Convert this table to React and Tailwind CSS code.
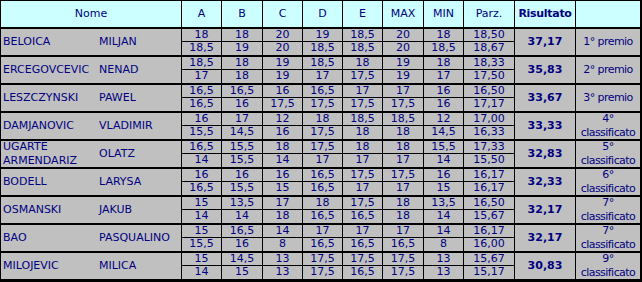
const rows = [
  ["BELOICA", "MILJAN", ["18", "18", "20", "19", "18,5", "20", "18", "18,50"], ["18,5", "19", "20", "18,5", "18,5", "20", "18,5", "18,67"], "37,17", ["1° premio"]],
  ["ERCEGOVCEVIC", "NENAD", ["18,5", "18", "19", "18,5", "18", "19", "18", "18,33"], ["17", "18", "19", "17", "17,5", "19", "17", "17,50"], "35,83", ["2° premio"]],
  ["LESZCZYNSKI", "PAWEL", ["16,5", "16,5", "16", "16,5", "17", "17", "16", "16,50"], ["16,5", "16", "17,5", "17,5", "17,5", "17,5", "16", "17,17"], "33,67", ["3° premio"]],
  ["DAMJANOVIC", "VLADIMIR", ["16", "17", "12", "18", "18,5", "18,5", "12", "17,00"], ["15,5", "14,5", "16", "17,5", "18", "18", "14,5", "16,33"], "33,33", ["4°", "classificato"]],
  ["UGARTE ARMENDARIZ", "OLATZ", ["16,5", "15,5", "18", "17,5", "18", "18", "15,5", "17,33"], ["14", "15,5", "14", "17", "17", "17", "14", "15,50"], "32,83", ["5°", "classificato"]],
  ["BODELL", "LARYSA", ["16", "16", "16", "16,5", "17,5", "17,5", "16", "16,17"], ["16,5", "15,5", "15", "16,5", "17", "17", "15", "16,17"], "32,33", ["6°", "classificato"]],
  ["OSMANSKI", "JAKUB", ["15", "13,5", "17", "18", "17,5", "18", "13,5", "16,50"], ["14", "14", "18", "16,5", "16,5", "18", "14", "15,67"], "32,17", ["7°", "classificato"]],
  ["BAO", "PASQUALINO", ["15", "16,5", "14", "17", "17", "17", "14", "16,17"], ["15,5", "16", "8", "16,5", "16,5", "16,5", "8", "16,00"], "32,17", ["7°", "classificato"]],
  ["MILOJEVIC", "MILICA", ["15", "14,5", "13", "17,5", "17,5", "17,5", "13", "15,67"], ["14", "15", "13", "17,5", "16,5", "17,5", "13", "15,17"], "30,83", ["9°", "classificato"]],
]

const heads = ["A", "B", "C", "D", "E", "MAX", "MIN", "Parz."]

export default function App() {
  return (
    <div className="w-[642px] h-[282px] bg-black pt-px pl-px pr-[2px] pb-[3px] font-['DejaVu_Sans',sans-serif] text-[11px] text-[#000080]">
      <div className="grid grid-cols-[180px_39px_40px_39px_39px_39px_40px_39px_50px_60px_64px] grid-rows-[26px_repeat(18,13px)] gap-px">
        <div className="bg-[#ccffff] flex items-center justify-center">Nome</div>
        {heads.map((h) => (
          <div key={h} className="bg-[#ccffff] flex items-center justify-center">{h}</div>
        ))}
        <div className="bg-[#ccffff] flex items-center justify-center font-bold tracking-[-0.3px]">Risultato</div>
        <div className="bg-[#ccffff]"></div>

        {rows.map((r, i) => [
          <div key={i + "n"} className="row-span-2 bg-[#c0c0c0] border-t border-black flex items-center pl-[2px] leading-[14px]">
            <div className="w-[96px]">{r[0]}</div>
            <div>{r[1]}</div>
          </div>,
          ...r[2].map((v, j) => (
            <div key={i + "a" + j} className="bg-[#c0c0c0] border-t border-black text-center leading-[12px]">{v}</div>
          )),
          <div key={i + "r"} className="row-span-2 bg-[#c0c0c0] border-t border-black flex items-center justify-center font-bold text-[#000080]">{r[4]}</div>,
          <div key={i + "p"} className="row-span-2 bg-[#c0c0c0] border-t border-black flex flex-col items-center justify-center leading-[14px] tracking-[-0.55px]">
            {r[5].map((t) => <div key={t}>{t}</div>)}
          </div>,
          ...r[3].map((v, j) => (
            <div key={i + "b" + j} className="bg-[#c0c0c0] text-center leading-[12px]">{v}</div>
          )),
        ])}
      </div>
    </div>
  )
}
